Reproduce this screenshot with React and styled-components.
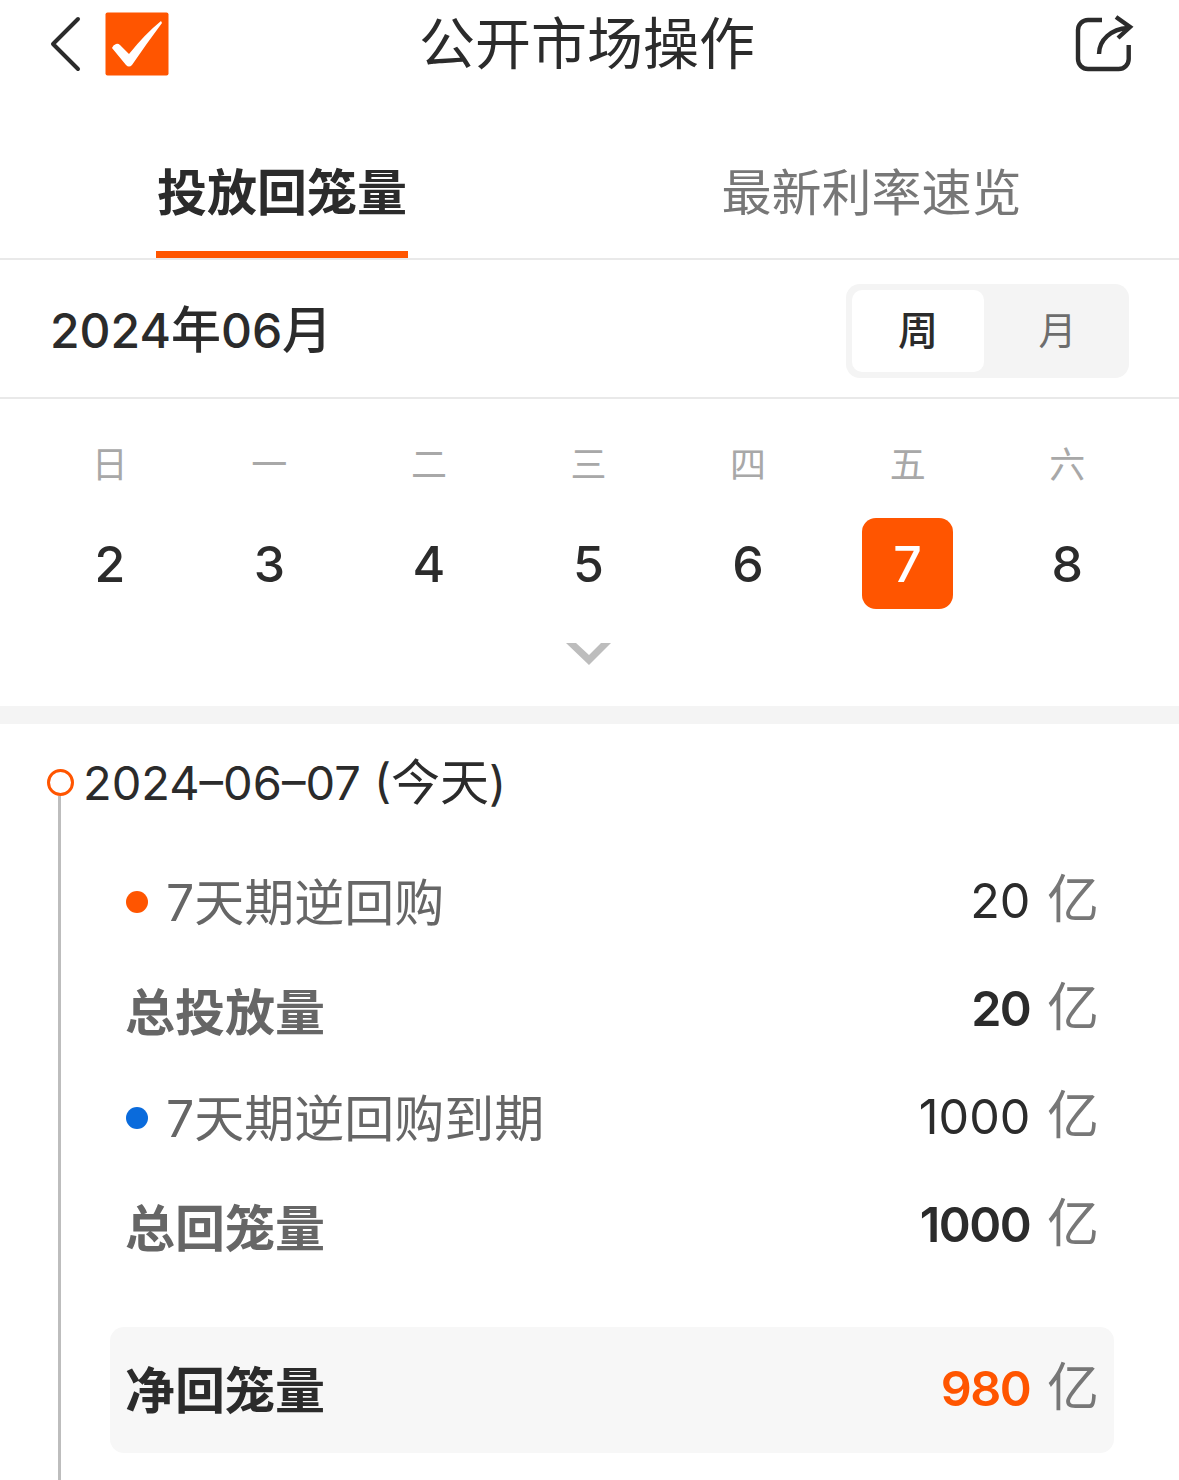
import styled, { createGlobalStyle } from "styled-components"

const ORANGE = "#ff5500"

const GlobalStyle = createGlobalStyle`
  html, body {
    margin: 0;
    background: #fff;
  }
  body {
    font-family: "Noto Sans CJK SC", sans-serif;
    color: #2b2b2b;
  }
`
const Page = styled.div`
  width: 1179px;
  height: 1480px;
  overflow: hidden;
`
const Num = styled.span`
  font-family: Inter, "Liberation Sans", sans-serif;
  font-size: ${(p) => p.$size || 48}px;
`
const Header = styled.header`
  height: 88px;
  display: grid;
  grid-template-columns: 1fr auto 1fr;
  align-items: center;
  padding: 0 43px 0 38px;
`
const HeaderLeft = styled.div`
  display: flex;
  align-items: center;
  gap: 21px;
  padding-left: 8px;
`
const HeaderRight = styled.div`
  display: flex;
  justify-content: flex-end;
`
const Title = styled.h1`
  margin: 0;
  padding-bottom: 8px;
  font-size: 56px;
  font-weight: 400;
  line-height: 80px;
`
const Tabs = styled.nav`
  height: 170px;
  display: grid;
  grid-template-columns: 564px 1fr;
  border-bottom: 2px solid #e9e9e9;
`
const Tab = styled.div`
  display: flex;
  justify-content: center;
  padding-top: 70px;
  box-sizing: border-box;
  font-size: 50px;
  line-height: 62px;
  font-weight: ${(p) => (p.$active ? 700 : 400)};
  color: ${(p) => (p.$active ? "#2b2b2b" : "#777")};
  span {
    position: relative;
    height: 100px;
    padding: 0 1px;
  }
  span::after {
    content: "";
    display: ${(p) => (p.$active ? "block" : "none")};
    position: absolute;
    left: 0;
    right: 0;
    bottom: 0;
    height: 7px;
    background: ${ORANGE};
  }
`
const MonthRow = styled.div`
  height: 137px;
  display: flex;
  align-items: center;
  justify-content: space-between;
  padding: 0 50px;
  border-bottom: 2px solid #e9e9e9;
`
const MonthLabel = styled.div`
  font-size: 50px;
  font-weight: 500;
  margin-bottom: 6px;
`
const Toggle = styled.div`
  width: 283px;
  height: 94px;
  margin-top: 4px;
  box-sizing: border-box;
  padding: 6px;
  display: flex;
  background: #f4f4f4;
  border-radius: 14px;
`
const ToggleItem = styled.div`
  width: 132px;
  flex: ${(p) => (p.$active ? "none" : 1)};
  box-sizing: border-box;
  display: flex;
  align-items: center;
  justify-content: center;
  padding: 0 0 6px ${(p) => (p.$active ? 0 : 8)}px;
  font-size: ${(p) => (p.$active ? 40 : 38)}px;
  font-weight: ${(p) => (p.$active ? 500 : 400)};
  color: ${(p) => (p.$active ? "#2b2b2b" : "#6d6d6d")};
  background: ${(p) => (p.$active ? "#fff" : "transparent")};
  border-radius: 10px;
`
const Calendar = styled.section`
  height: 307px;
  padding: 40px 32px 0 30px;
  box-sizing: border-box;
  display: flex;
  flex-direction: column;
`
const WeekGrid = styled.div`
  display: grid;
  grid-template-columns: repeat(7, 1fr);
  justify-items: center;
  align-items: center;
`
const Weekday = styled.div`
  height: 52px;
  line-height: 46px;
  font-size: 36px;
  color: #a8a8a8;
`
const DayCell = styled.div`
  width: 91px;
  height: 91px;
  margin-top: 27px;
  display: flex;
  align-items: center;
  justify-content: center;
  font-family: Inter, "Liberation Sans", sans-serif;
  font-size: 50px;
  font-weight: 500;
  border-radius: 14px;
  color: ${(p) => (p.$selected ? "#fff" : "#2b2b2b")};
  background: ${(p) => (p.$selected ? ORANGE : "transparent")};
`
const Expand = styled.div`
  display: flex;
  justify-content: center;
  margin-top: 33px;
`
const Band = styled.div`
  height: 18px;
  background: #f4f4f4;
`
const DayHead = styled.div`
  display: flex;
  align-items: center;
  gap: 9px;
  height: 27px;
  padding: 45px 0 0 47px;
  font-size: 49px;
  line-height: 27px;
  span {
    margin-bottom: 4px;
  }
`
const Ring = styled.i`
  width: 27px;
  height: 27px;
  box-sizing: border-box;
  border: 3px solid ${ORANGE};
  border-radius: 50%;
`
const Timeline = styled.div`
  margin-left: 58px;
  border-left: 3px solid #bdbdbd;
  padding: 52px 0 0 49px;
  height: 700px;
  width: 1004px;
`
const Row = styled.div`
  height: 108px;
  display: flex;
  align-items: center;
  justify-content: space-between;
  padding: 0 15px;
`
const RowLabel = styled.div`
  display: flex;
  align-items: center;
  gap: 18px;
  font-size: 50px;
  line-height: 108px;
  font-weight: ${(p) => (p.$bold ? 700 : 400)};
  color: ${(p) => (p.$strong ? "#2b2b2b" : "#666")};
  span {
    margin-bottom: 2px;
  }
`
const NetLabel = styled(RowLabel)`
  margin-bottom: 6px;
`
const Bullet = styled.i`
  width: 22px;
  height: 22px;
  margin-left: 1px;
  border-radius: 50%;
  background: ${(p) => p.$color};
`
const Amount = styled.div`
  font-size: 52px;
  line-height: 108px;
  color: #777;
  margin-bottom: 8px;
  span {
    margin-right: 5px;
    letter-spacing: ${(p) => (p.$bold ? -1.5 : 0)}px;
    font-weight: ${(p) => (p.$bold ? 600 : 400)};
    color: ${(p) => p.$color || "#2b2b2b"};
  }
`
const NetBox = styled.div`
  margin-top: 47px;
  height: 126px;
  background: #f7f7f7;
  border-radius: 14px;
  display: flex;
  align-items: center;
  justify-content: space-between;
  padding: 0 15px;
`

function BackIcon() {
  return (
    <svg width="38" height="58" viewBox="0 0 38 58">
      <path d="M32 4 L7 29 L32 54" fill="none" stroke="#2b2b2b" strokeWidth="4" strokeLinecap="round" strokeLinejoin="round" />
    </svg>
  )
}

function CheckIcon() {
  return (
    <svg width="64" height="64" viewBox="0 0 64 64">
      <rect x="0.5" y="0.5" width="63" height="63" rx="2" fill={ORANGE} />
      <path d="M7 36 Q8 33 11 32 Q13 31 15 33 L24 42 Q40 22 56 9 L57 11 Q42 31 27 53 Q24 56 21 53 Z" fill="#fff" />
    </svg>
  )
}

function ShareIcon() {
  return (
    <svg width="66" height="66" viewBox="0 0 66 66">
      <g fill="none" stroke="#2b2b2b" strokeWidth="4.4">
        <path d="M32 9 H18 a10 10 0 0 0 -10 10 V48 a10 10 0 0 0 10 10 H48.7 a10 10 0 0 0 10 -10 V34" />
        <path d="M29 43 C29 29 41 18 58 17" />
        <path d="M46 6 L60 16 L48 27" />
      </g>
    </svg>
  )
}

function ChevronDown() {
  return (
    <svg width="46" height="24" viewBox="0 0 46 24" style={{ display: "block" }}>
      <polygon points="0,1 10,1 23,13 35,1 45,1 23,23" fill="#bdbdbd" />
    </svg>
  )
}

const weekdays = ["日", "一", "二", "三", "四", "五", "六"]
const days = [2, 3, 4, 5, 6, 7, 8]

const rows = [
  { num: "7", label: "天期逆回购", amount: "20", bullet: ORANGE },
  { label: "总投放量", amount: "20", bold: true },
  { num: "7", label: "天期逆回购到期", amount: "1000", bullet: "#0a6bdc" },
  { label: "总回笼量", amount: "1000", bold: true },
]

function App() {
  return (
    <Page>
      <GlobalStyle />
      <Header>
        <HeaderLeft>
          <BackIcon />
          <CheckIcon />
        </HeaderLeft>
        <Title>公开市场操作</Title>
        <HeaderRight>
          <ShareIcon />
        </HeaderRight>
      </Header>
      <Tabs>
        <Tab $active><span>投放回笼量</span></Tab>
        <Tab><span>最新利率速览</span></Tab>
      </Tabs>
      <MonthRow>
        <MonthLabel><Num>2024</Num>年<Num>06</Num>月</MonthLabel>
        <Toggle>
          <ToggleItem $active>周</ToggleItem>
          <ToggleItem>月</ToggleItem>
        </Toggle>
      </MonthRow>
      <Calendar>
        <WeekGrid>
          {weekdays.map((d) => <Weekday key={d}>{d}</Weekday>)}
          {days.map((d) => <DayCell key={d} $selected={d === 7}>{d}</DayCell>)}
        </WeekGrid>
        <Expand><ChevronDown /></Expand>
      </Calendar>
      <Band />
      <DayHead>
        <Ring />
        <span><Num $size={47}>2024–06–07 (</Num>今天<Num $size={47}>)</Num></span>
      </DayHead>
      <Timeline>
        {rows.map((r) => (
          <Row key={r.label}>
            <RowLabel $bold={r.bold}>
              {r.bullet && <Bullet $color={r.bullet} />}
              <span>{r.num && <Num $size={50}>{r.num}</Num>}{r.label}</span>
            </RowLabel>
            <Amount $bold={r.bold}><Num $size={48.5}>{r.amount}</Num> 亿</Amount>
          </Row>
        ))}
        <NetBox>
          <NetLabel $bold $strong>净回笼量</NetLabel>
          <Amount $bold $color={ORANGE}><Num $size={48.5}>980</Num> 亿</Amount>
        </NetBox>
      </Timeline>
    </Page>
  )
}

export default App
